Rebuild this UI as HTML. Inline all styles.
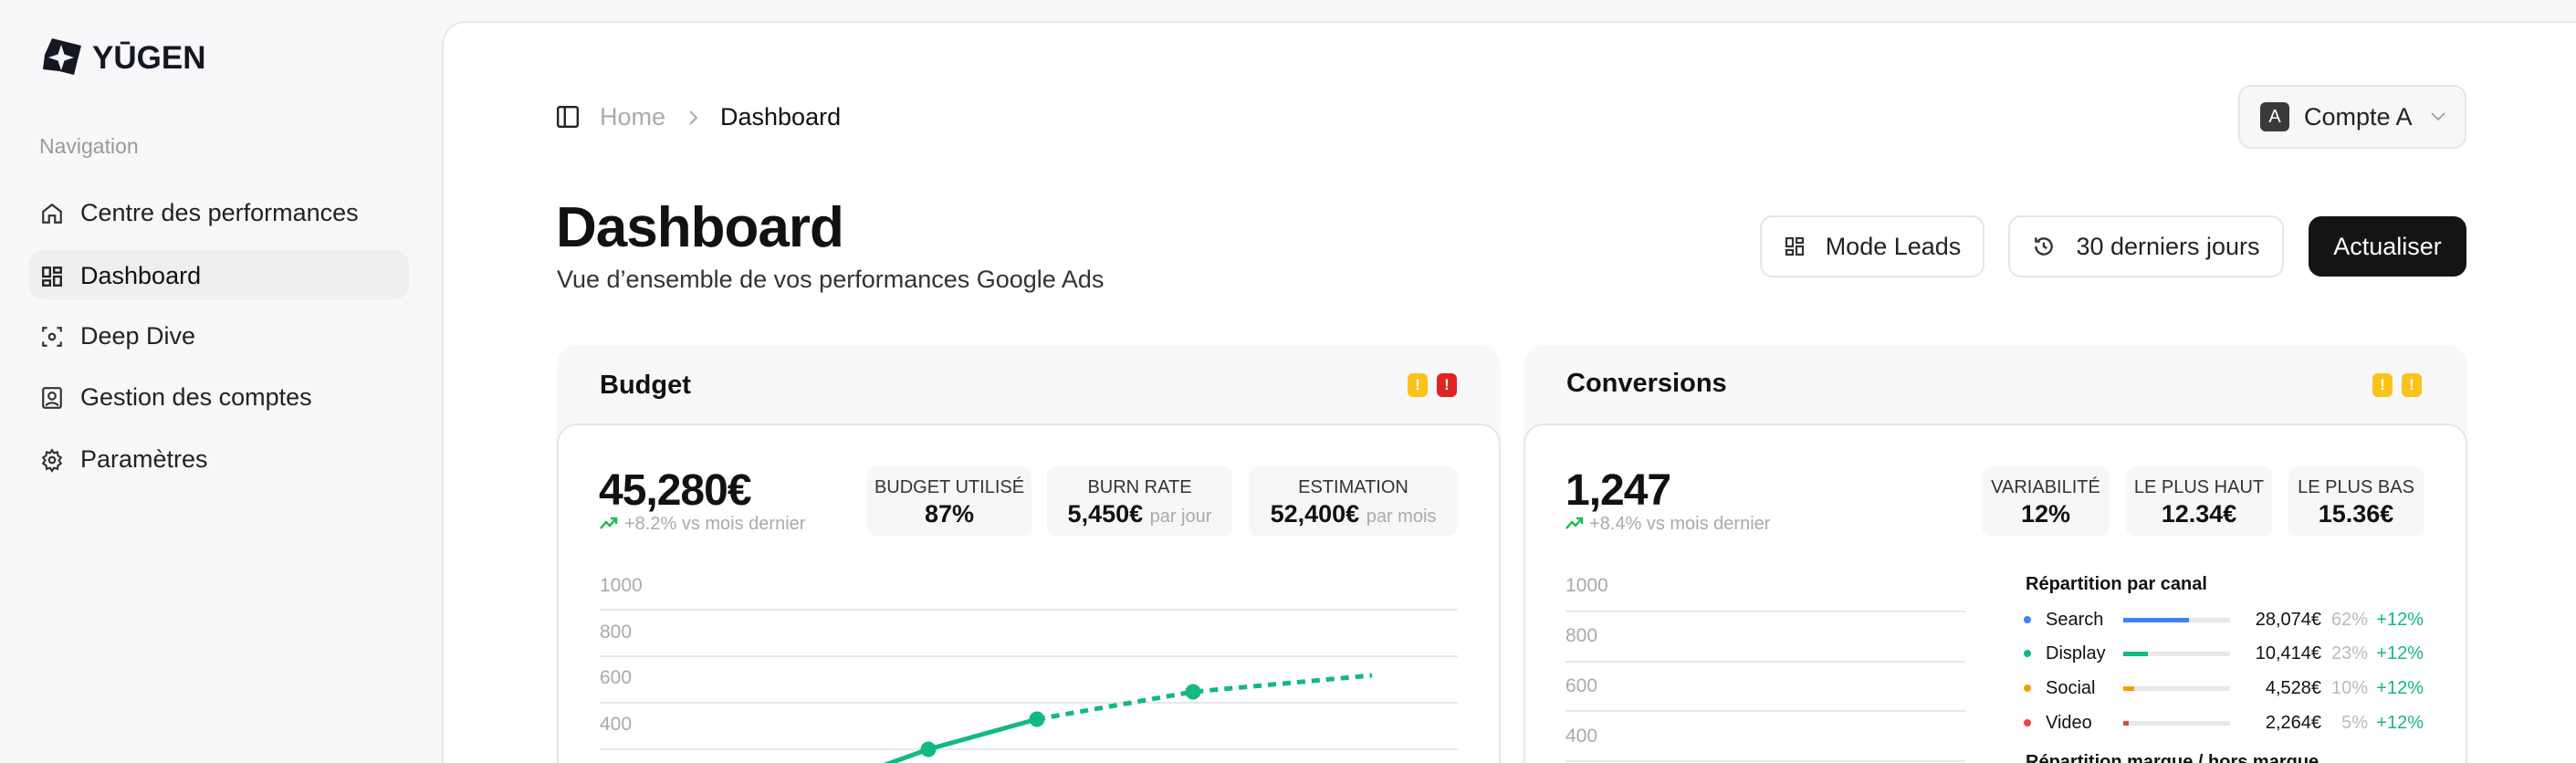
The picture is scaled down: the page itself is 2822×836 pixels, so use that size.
<!DOCTYPE html>
<html style="width:2822px;height:836px;overflow:hidden"><head><meta charset="utf-8"><style>
*{box-sizing:border-box;margin:0;padding:0}
body{width:2822px;height:836px;overflow:hidden;background:#f8f8fa;font-family:"Liberation Sans",sans-serif;color:#111;position:relative}
.a{position:absolute;white-space:nowrap}
.nav{font-size:27px;color:#222;display:flex;align-items:center}
.nav svg{margin-right:18px}
.main{position:absolute;left:484px;top:23px;width:2338px;height:813px;background:#fff;border:2px solid #e8e8ea;border-right:none;border-bottom:none;border-radius:26px 0 0 0}
.btn{position:absolute;border:2px solid #e6e6e8;border-radius:14px;background:#fff;display:flex;align-items:center;justify-content:center;font-size:27px;color:#222}
.card{position:absolute;top:378px;width:1034px;height:458px;background:#f8f8fa;border-radius:22px 22px 0 0;overflow:hidden}
.inner{position:absolute;left:0;right:0;top:86px;height:500px;background:#fff;border:2px solid #e6e6e8;border-radius:22px}
.stat{position:absolute;top:511px;height:76px;background:#f7f7f9;border-radius:10px;text-align:center}
.stat .l{font-size:20px;color:#333;margin-top:12px}
.stat .v{font-size:27px;font-weight:bold;margin-top:2px}
.stat .v span{font-size:20px;color:#aaa;font-weight:normal}
.ylab{position:absolute;font-size:21px;color:#aaa}
.grid{position:absolute;height:2px;background:#e8e8ea}
.badge{position:absolute;width:22px;height:26px;border-radius:6px;color:#fff;font-size:17px;font-weight:bold;text-align:center;line-height:26px}
.row{position:absolute;font-size:20px;height:24px;line-height:24px}
</style></head><body>
<svg class="a" style="left:43px;top:40px" width="48" height="46" viewBox="0 0 48 46"><path fill-rule="evenodd" d="M14 2 L30 6 L46 10 L42 26 L38 42 L22 38 L4 36 L6 20 Z M24 9 L27.5 19.5 L38 23 L27.5 26.5 L24 37 L20.5 26.5 L10 23 L20.5 19.5 Z" fill="#151823"/></svg>
<div class="a" style="left:101px;top:44px;font-size:35px;font-weight:bold;color:#151823">YŪGEN</div>
<div class="a" style="left:43px;top:147px;font-size:23px;color:#999">Navigation</div>
<div class="a" style="left:32px;top:274px;width:416px;height:54px;background:#efeff1;border-radius:16px"></div>
<div class="a nav" style="left:44px;top:218px"><svg width="26" height="28" viewBox="0 0 24 24" fill="none" stroke="#333" stroke-width="2"><path d="M3 10 L12 3 L21 10 V21 H15 V14 H9 V21 H3 Z"/></svg>Centre des performances</div>
<div class="a nav" style="left:44px;top:287px;color:#111"><svg width="26" height="28" viewBox="0 0 24 24" fill="none" stroke="#222" stroke-width="2.2"><rect x="3" y="3" width="7" height="9"/><rect x="14" y="3" width="7" height="5"/><rect x="14" y="12" width="7" height="9"/><rect x="3" y="16" width="7" height="5"/></svg>Dashboard</div>
<div class="a nav" style="left:44px;top:353px"><svg width="26" height="28" viewBox="0 0 24 24" fill="none" stroke="#333" stroke-width="2"><path d="M3 7V3H7M17 3H21V7M21 17V21H17M7 21H3V17"/><circle cx="12" cy="12" r="3"/></svg>Deep Dive</div>
<div class="a nav" style="left:44px;top:420px"><svg width="26" height="28" viewBox="0 0 24 24" fill="none" stroke="#333" stroke-width="2"><rect x="3" y="2" width="18" height="20" rx="2"/><circle cx="12" cy="10" r="3.5"/><path d="M6 20c1-4 11-4 12 0"/></svg>Gestion des comptes</div>
<div class="a nav" style="left:44px;top:488px"><svg width="26" height="28" viewBox="0 0 24 24" fill="none" stroke="#333" stroke-width="2"><circle cx="12" cy="12" r="3"/><path d="M12 2l2 3 3.5-1 .5 3.5 3 2-2 3 2 3-3 2-.5 3.5-3.5-1-2 3-2-3-3.5 1-.5-3.5-3-2 2-3-2-3 3-2 .5-3.5 3.5 1z"/></svg>Paramètres</div>

<div class="main"></div>
<svg class="a" style="left:609px;top:115px" width="26" height="26" viewBox="0 0 24 24" fill="none" stroke="#222" stroke-width="2.2"><rect x="2" y="2" width="20" height="20" rx="2"/><path d="M9 2V22"/></svg>
<div class="a" style="left:657px;top:113px;font-size:27px;color:#aaa">Home</div>
<svg class="a" style="left:752px;top:118px" width="14" height="22" viewBox="0 0 14 22" fill="none" stroke="#aaa" stroke-width="2"><path d="M4 4L11 11L4 18"/></svg>
<div class="a" style="left:789px;top:113px;font-size:27px;color:#111">Dashboard</div>

<div class="btn" style="left:2452px;top:93px;width:250px;height:70px;background:#f7f7f9;justify-content:flex-start;padding-left:22px"><div style="width:32px;height:32px;border-radius:6px;background:#3a3a3a;color:#fff;font-size:20px;text-align:center;line-height:32px;margin-right:16px">A</div>Compte A<svg style="margin-left:18px" width="20" height="14" viewBox="0 0 20 14" fill="none" stroke="#aaa" stroke-width="2"><path d="M3 3L10 10L17 3"/></svg></div>

<div class="a" style="left:609px;top:214px;font-size:62px;font-weight:bold;letter-spacing:-1px">Dashboard</div>
<div class="a" style="left:610px;top:291px;font-size:27px;color:#333">Vue d’ensemble de vos performances Google Ads</div>

<div class="btn" style="left:1928px;top:236px;width:246px;height:68px"><svg style="margin-right:22px" width="24" height="26" viewBox="0 0 24 24" fill="none" stroke="#333" stroke-width="2.2"><rect x="3" y="3" width="7" height="9"/><rect x="14" y="3" width="7" height="5"/><rect x="14" y="12" width="7" height="9"/><rect x="3" y="16" width="7" height="5"/></svg>Mode Leads</div>
<div class="btn" style="left:2200px;top:236px;width:302px;height:68px"><svg style="margin-right:22px" width="26" height="26" viewBox="0 0 24 24" fill="none" stroke="#333" stroke-width="2.2"><path d="M4 12a8 8 0 1 0 2.5-5.8M4 3v4h4"/><path d="M12 8v4l3 2"/></svg>30 derniers jours</div>
<div class="btn" style="left:2529px;top:237px;width:173px;height:66px;background:#141414;border-color:#141414;color:#fff">Actualiser</div>

<!-- Budget card -->
<div class="card" style="left:610px"><div class="inner"></div></div>
<div class="a" style="left:657px;top:406px;font-size:29px;font-weight:bold;color:#111">Budget</div>
<div class="badge" style="left:1542px;top:409px;background:#fbc21a">!</div>
<div class="badge" style="left:1574px;top:409px;background:#e02424">!</div>
<div class="a" style="left:656px;top:510px;font-size:48px;font-weight:bold;letter-spacing:-1px">45,280€</div>
<svg class="a" style="left:657px;top:565px" width="20" height="16" viewBox="0 0 20 16" fill="none" stroke="#1db954" stroke-width="2.4"><path d="M1 14L7 7L11 11L18 3M12 3H18V9"/></svg>
<div class="a" style="left:684px;top:563px;font-size:20px;color:#aaa">+8.2% vs mois dernier</div>
<div class="stat" style="left:950px;width:180px"><div class="l">BUDGET UTILISÉ</div><div class="v">87%</div></div>
<div class="stat" style="left:1147px;width:203px"><div class="l">BURN RATE</div><div class="v">5,450€ <span>par jour</span></div></div>
<div class="stat" style="left:1368px;width:229px"><div class="l">ESTIMATION</div><div class="v">52,400€ <span>par mois</span></div></div>
<div class="ylab" style="left:657px;top:630px">1000</div>
<div class="ylab" style="left:657px;top:681px">800</div>
<div class="ylab" style="left:657px;top:731px">600</div>
<div class="ylab" style="left:657px;top:782px">400</div>
<div class="grid" style="left:657px;width:940px;top:667px"></div>
<div class="grid" style="left:657px;width:940px;top:718px"></div>
<div class="grid" style="left:657px;width:940px;top:769px"></div>
<div class="grid" style="left:657px;width:940px;top:820px"></div>
<svg class="a" style="left:0;top:0" width="2822" height="836"><g fill="#12b981" stroke="#12b981" stroke-width="5"><path d="M950 845L1017 821L1136 788" fill="none"/><path d="M1136 788L1307 758L1503 740" fill="none" stroke-dasharray="9 7"/><circle cx="1017" cy="821" r="6"/><circle cx="1136" cy="788" r="6"/><circle cx="1307" cy="758" r="6"/>
<path d="M1890 850L1908 837" fill="none" stroke-dasharray="9 7"/><path d="M1935 826L1994 794L2066 776" fill="none" stroke-dasharray="9 7"/><circle cx="1935" cy="826" r="4"/><circle cx="1994" cy="794" r="4"/></g></svg>

<!-- Conversions card -->
<div class="card" style="left:1669px"><div class="inner"></div></div>
<div class="a" style="left:1716px;top:404px;font-size:29px;font-weight:bold;color:#111">Conversions</div>
<div class="badge" style="left:2599px;top:409px;background:#fbc21a">!</div>
<div class="badge" style="left:2631px;top:409px;background:#fbc21a">!</div>
<div class="a" style="left:1715px;top:510px;font-size:48px;font-weight:bold;letter-spacing:-1px">1,247</div>
<svg class="a" style="left:1715px;top:565px" width="20" height="16" viewBox="0 0 20 16" fill="none" stroke="#1db954" stroke-width="2.4"><path d="M1 14L7 7L11 11L18 3M12 3H18V9"/></svg>
<div class="a" style="left:1741px;top:563px;font-size:20px;color:#aaa">+8.4% vs mois dernier</div>
<div class="stat" style="left:2171px;width:140px"><div class="l">VARIABILITÉ</div><div class="v">12%</div></div>
<div class="stat" style="left:2329px;width:160px"><div class="l">LE PLUS HAUT</div><div class="v">12.34€</div></div>
<div class="stat" style="left:2507px;width:148px"><div class="l">LE PLUS BAS</div><div class="v">15.36€</div></div>
<div class="ylab" style="left:1715px;top:630px">1000</div>
<div class="ylab" style="left:1715px;top:685px">800</div>
<div class="ylab" style="left:1715px;top:740px">600</div>
<div class="ylab" style="left:1715px;top:795px">400</div>
<div class="grid" style="left:1715px;width:438px;top:669px"></div>
<div class="grid" style="left:1715px;width:438px;top:724px"></div>
<div class="grid" style="left:1715px;width:438px;top:778px"></div>
<div class="grid" style="left:1715px;width:438px;top:833px"></div>
<div class="a" style="left:2219px;top:629px;font-size:20px;font-weight:bold">Répartition par canal</div>
<div class="a" style="left:2219px;top:824px;font-size:20px;font-weight:bold">Répartition marque / hors marque</div>

<div class="row" style="left:2217px;top:667px;width:440px"><span style="position:absolute;left:0;top:8px;width:8px;height:8px;border-radius:50%;background:#3b82f6"></span><span style="position:absolute;left:24px">Search</span><span style="position:absolute;left:109px;top:10px;width:117px;height:5px;background:#e8e8ea"><span style="display:block;width:72px;height:5px;background:#3b82f6"></span></span><span style="position:absolute;right:114px">28,074€</span><span style="position:absolute;right:63px;color:#bbb">62%</span><span style="position:absolute;right:2px;color:#12b981">+12%</span></div>
<div class="row" style="left:2217px;top:704px;width:440px"><span style="position:absolute;left:0;top:8px;width:8px;height:8px;border-radius:50%;background:#12b981"></span><span style="position:absolute;left:24px">Display</span><span style="position:absolute;left:109px;top:10px;width:117px;height:5px;background:#e8e8ea"><span style="display:block;width:27px;height:5px;background:#12b981"></span></span><span style="position:absolute;right:114px">10,414€</span><span style="position:absolute;right:63px;color:#bbb">23%</span><span style="position:absolute;right:2px;color:#12b981">+12%</span></div>
<div class="row" style="left:2217px;top:742px;width:440px"><span style="position:absolute;left:0;top:8px;width:8px;height:8px;border-radius:50%;background:#f59e0b"></span><span style="position:absolute;left:24px">Social</span><span style="position:absolute;left:109px;top:10px;width:117px;height:5px;background:#e8e8ea"><span style="display:block;width:12px;height:5px;background:#f59e0b"></span></span><span style="position:absolute;right:114px">4,528€</span><span style="position:absolute;right:63px;color:#bbb">10%</span><span style="position:absolute;right:2px;color:#12b981">+12%</span></div>
<div class="row" style="left:2217px;top:780px;width:440px"><span style="position:absolute;left:0;top:8px;width:8px;height:8px;border-radius:50%;background:#ef4444"></span><span style="position:absolute;left:24px">Video</span><span style="position:absolute;left:109px;top:10px;width:117px;height:5px;background:#e8e8ea"><span style="display:block;width:6px;height:5px;background:#ef4444"></span></span><span style="position:absolute;right:114px">2,264€</span><span style="position:absolute;right:63px;color:#bbb">5%</span><span style="position:absolute;right:2px;color:#12b981">+12%</span></div>
</body></html>
